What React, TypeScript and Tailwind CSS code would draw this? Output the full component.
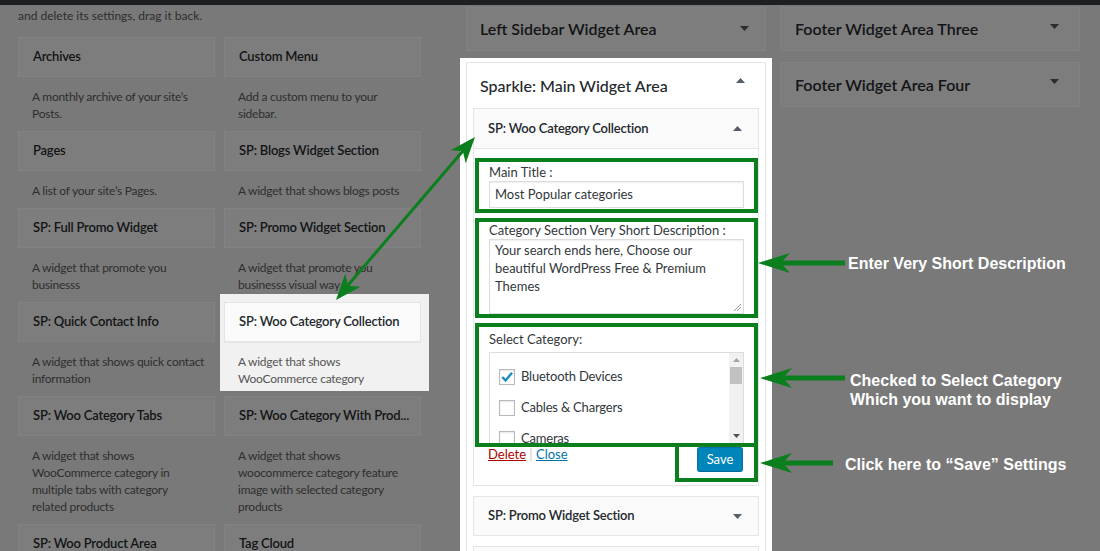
import React from "react";

type Item = { title: string; lines: string[]; active?: boolean };

const rows: [Item, Item][] = [
  [
    { title: "Archives", lines: ["A monthly archive of your site’s", "Posts."] },
    { title: "Custom Menu", lines: ["Add a custom menu to your", "sidebar."] },
  ],
  [
    { title: "Pages", lines: ["A list of your site’s Pages."] },
    { title: "SP: Blogs Widget Section", lines: ["A widget that shows blogs posts"] },
  ],
  [
    { title: "SP: Full Promo Widget", lines: ["A widget that promote you", "businesss"] },
    { title: "SP: Promo Widget Section", lines: ["A widget that promote you", "businesss visual way"] },
  ],
  [
    { title: "SP: Quick Contact Info", lines: ["A widget that shows quick contact", "information"] },
    { title: "SP: Woo Category Collection", lines: ["A widget that shows", "WooCommerce category"], active: true },
  ],
  [
    {
      title: "SP: Woo Category Tabs",
      lines: ["A widget that shows", "WooCommerce category in", "multiple tabs with category", "related products"],
    },
    {
      title: "SP: Woo Category With Prod...",
      lines: ["A widget that shows", "woocommerce category feature", "image with selected category", "products"],
    },
  ],
  [
    { title: "SP: Woo Product Area", lines: [] },
    { title: "Tag Cloud", lines: [] },
  ],
];

const Caret = ({ up, className }: { up?: boolean; className?: string }) => (
  <svg width="9" height="5" viewBox="0 0 9 5" className={className}>
    <path d={up ? "M0 5 L4.5 0 L9 5Z" : "M0 0 L9 0 L4.5 5Z"} fill="currentColor" />
  </svg>
);

const WidgetCard = ({ item }: { item: Item }) => {
  if (item.active) {
    return (
      <div className="-mt-[8px] -ml-[4px] -mr-[8px] w-[209px] bg-[#f1f1f1] pt-[8px] pl-[4px] pr-[8px] pb-[4px]">
        <div className="flex h-[40px] items-center border border-[#e5e5e5] bg-[#fafafa] px-[14px] text-[13px] font-semibold tracking-[-0.2px] text-[#23282d] shadow-[0_1px_1px_rgba(0,0,0,0.04)]">
          {item.title}
        </div>
        <div className="px-[14px] pt-[11px] text-[12px] leading-[17px] tracking-[-0.25px] text-[#555]">
          {item.lines.map((l) => (
            <div key={l} className="whitespace-nowrap">{l}</div>
          ))}
        </div>
      </div>
    );
  }
  return (
    <div className="w-[197px]">
      <div className="flex h-[40px] items-center border border-[#828282] bg-[#7d7d7d] px-[14px] text-[13px] font-semibold tracking-[-0.2px] text-[#121416] whitespace-nowrap">
        {item.title}
      </div>
      {item.lines.length > 0 && (
        <div className="px-[14px] pt-[11px] pb-[9px] text-[12px] leading-[17px] tracking-[-0.25px] text-[#2e2e2e]">
          {item.lines.map((l) => (
            <div key={l} className="whitespace-nowrap">{l}</div>
          ))}
        </div>
      )}
    </div>
  );
};

const Checkbox = ({ checked }: { checked?: boolean }) => (
  <div className="flex h-[16px] w-[16px] items-center justify-center border border-[#b4b9be] bg-white shadow-[inset_0_1px_2px_rgba(0,0,0,0.1)]">
    {checked && (
      <svg width="14" height="14" viewBox="0 0 14 14">
        <path d="M2.2 7 L5.6 10.4 L12 2.8" fill="none" stroke="#1e8cbe" strokeWidth="2.4" />
      </svg>
    )}
  </div>
);

function head(tx: number, ty: number, fx: number, fy: number, L: number, W: number) {
  const dx = tx - fx;
  const dy = ty - fy;
  const len = Math.hypot(dx, dy);
  const ux = dx / len;
  const uy = dy / len;
  const nx = -uy;
  const ny = ux;
  const bx = tx - ux * L;
  const by = ty - uy * L;
  const mx = tx - ux * L * 0.72;
  const my = ty - uy * L * 0.72;
  return `${tx},${ty} ${bx + (nx * W) / 2},${by + (ny * W) / 2} ${mx},${my} ${bx - (nx * W) / 2},${by - (ny * W) / 2}`;
}

const green = "#0b7f1e";

export default function App() {
  return (
    <div className="relative h-[551px] w-[1100px] overflow-hidden bg-[#797979] font-['Lato','Open_Sans',sans-serif]">
      <div className="h-[5px] bg-[#1e1f21]" />
      <div className="flex">
        {/* available widgets */}
        <div className="w-[460px] pl-[18px]">
          <p className="mt-[2px] text-[12px] leading-[17px] text-[#2e2e2e]">and delete its settings, drag it back.</p>
          <div className="mt-[13px]">
            {rows.map((r, i) => (
              <div key={i} className="flex items-start gap-[9px]">
                <WidgetCard item={r[0]} />
                <WidgetCard item={r[1]} />
              </div>
            ))}
          </div>
        </div>

        {/* sidebar column */}
        <div className="w-[312px]">
          <div className="mx-[6px] mt-[2px] flex h-[44px] justify-between border border-[#828282] bg-[#7d7d7d] pl-[13px] pr-[16px]">
            <span className="self-center text-[16px] font-semibold text-[#121416]">Left Sidebar Widget Area</span>
            <Caret className="mt-[18px] text-[#2a2c2e]" />
          </div>

          <div className="mt-[7px] h-[500px] bg-white px-[6px] pt-[4px]">
            <div className="h-full border border-[#e5e5e5] bg-white">
              <div className="flex h-[45px] justify-between pl-[13px] pr-[20px]">
                <span className="self-center text-[16px] font-medium text-[#23282d]">Sparkle: Main Widget Area</span>
                <Caret up className="mt-[15px] text-[#555d66]" />
              </div>

              <div className="px-[6px]">
                {/* open widget */}
                <div className="border border-[#e5e5e5] bg-white">
                  <div className="flex h-[40px] items-center justify-between border-b border-[#e5e5e5] bg-[#fafafa] pl-[14px] pr-[16px]">
                    <span className="text-[13px] font-semibold tracking-[-0.2px] text-[#23282d]">SP: Woo Category Collection</span>
                    <Caret up className="text-[#555d66]" />
                  </div>

                  <div className="pb-[3px]">
                    <div className="ml-[1px] mt-[9px] w-[283px] border-4 border-[#0b7f1e] px-[10px] pt-[2px] pb-[1px]">
                      <div className="text-[13px] leading-[17px] text-[#32373c]">Main Title :</div>
                      <div className="flex h-[27px] items-center border border-[#ddd] px-[5px] text-[13px] text-[#32373c] shadow-[inset_0_1px_2px_rgba(0,0,0,0.07)]">
                        Most Popular categories
                      </div>
                    </div>

                    <div className="ml-[1px] mt-[5px] w-[283px] border-4 border-[#0b7f1e] px-[10px]">
                      <div className="text-[13px] leading-[17px] text-[#32373c]">Category Section Very Short Description :</div>
                      <div className="relative h-[75px] border border-[#ddd] px-[5px] pt-[1px] text-[13px] leading-[18px] text-[#32373c] shadow-[inset_0_1px_2px_rgba(0,0,0,0.07)]">
                        <div>Your search ends here, Choose our</div>
                        <div>beautiful WordPress Free &amp; Premium</div>
                        <div>Themes</div>
                        <svg width="8" height="8" viewBox="0 0 8 8" className="absolute bottom-[2px] right-[2px]">
                          <path d="M1 8 L8 1 M4 8 L8 4" stroke="#999" strokeWidth="1" />
                        </svg>
                      </div>
                    </div>

                    <div className="ml-[1px] mt-[5px] h-[124px] w-[283px] overflow-hidden border-4 border-[#0b7f1e] px-[10px] pt-[4px]">
                      <div className="text-[13px] leading-[17px] text-[#32373c]">Select Category:</div>
                      <div className="mt-[4px] flex h-[92px] border border-[#ddd] bg-white">
                        <div className="flex-1 pl-[9px] pt-[8px] text-[13px] tracking-[-0.2px] text-[#32373c]">
                          {[
                            ["Bluetooth Devices", true],
                            ["Cables & Chargers", false],
                            ["Cameras", false],
                          ].map(([label, c]) => (
                            <div key={label as string} className="flex h-[31px] items-center gap-[6px]">
                              <Checkbox checked={c as boolean} />
                              <span>{label as string}</span>
                            </div>
                          ))}
                        </div>
                        <div className="flex w-[14px] flex-col bg-[#f1f1f1]">
                          <div className="flex h-[14px] items-center justify-center">
                            <svg width="7" height="4" viewBox="0 0 7 4"><path d="M0 4 L3.5 0 L7 4Z" fill="#a3a3a3" /></svg>
                          </div>
                          <div className="mx-[1px] h-[17px] bg-[#c1c1c1]" />
                          <div className="flex-1" />
                          <div className="flex h-[14px] items-center justify-center">
                            <svg width="7" height="4" viewBox="0 0 7 4"><path d="M0 0 L7 0 L3.5 4Z" fill="#505050" /></svg>
                          </div>
                        </div>
                      </div>
                    </div>

                    <div className="-mt-[4px] ml-[1px] flex w-[283px] items-start justify-between">
                      <div className="pl-[13px] pt-[3px] text-[13px] leading-[17px]">
                        <a className="text-[#a00] underline">Delete</a>
                        <span className="text-[#ccc]"> | </span>
                        <a className="text-[#0073aa] underline">Close</a>
                      </div>
                      <div className="flex h-[39px] w-[83px] justify-end border-4 border-[#0b7f1e] pr-[11px]">
                        <div className="flex h-[25px] w-[46px] items-center justify-center rounded-[3px] border border-[#0073aa] border-b-[#006799] bg-[#0085ba] text-[13px] text-white">
                          Save
                        </div>
                      </div>
                    </div>
                  </div>
                </div>

                <div className="mt-[10px] flex h-[40px] items-center justify-between border border-[#e5e5e5] bg-[#fafafa] pl-[14px] pr-[16px]">
                  <span className="text-[13px] font-semibold tracking-[-0.2px] text-[#23282d]">SP: Promo Widget Section</span>
                  <Caret className="text-[#555d66]" />
                </div>
                <div className="mt-[10px] h-[40px] border border-[#e5e5e5] bg-[#fafafa]" />
              </div>
            </div>
          </div>
        </div>

        {/* right column */}
        <div className="ml-[8px] w-[300px]">
          <div className="mt-[2px] flex h-[44px] justify-between border border-[#828282] bg-[#7d7d7d] pl-[14px] pr-[20px]">
            <span className="self-center text-[16px] font-semibold text-[#121416]">Footer Widget Area Three</span>
            <Caret className="mt-[16px] text-[#2a2c2e]" />
          </div>
          <div className="mt-[11px] flex h-[45px] justify-between border border-[#828282] bg-[#7d7d7d] pl-[14px] pr-[20px]">
            <span className="self-center text-[16px] font-semibold text-[#121416]">Footer Widget Area Four</span>
            <Caret className="mt-[16px] text-[#2a2c2e]" />
          </div>

          <div className="font-['Liberation_Sans',Arial,sans-serif] text-[16px] font-bold leading-[19px] text-white">
            <div className="ml-[68px] mt-[147px]">Enter Very Short Description</div>
            <div className="ml-[70px] mt-[98px]">
              <div>Checked to Select Category</div>
              <div>Which you want to display</div>
            </div>
            <div className="ml-[65px] mt-[46px]">Click here to “Save” Settings</div>
          </div>
        </div>
      </div>

      {/* annotation arrows */}
      <svg className="pointer-events-none absolute inset-0" width="1100" height="551">
        <line x1="468" y1="145" x2="343" y2="291" stroke={green} strokeWidth="3" />
        <polygon points={head(475, 137, 336, 300, 26, 20)} fill={green} />
        <polygon points={head(336, 300, 475, 137, 26, 20)} fill={green} />

        <line x1="780" y1="263" x2="845" y2="263" stroke={green} strokeWidth="5" />
        <polygon points={head(758, 263, 845, 263, 32, 20)} fill={green} />
        <line x1="782" y1="378" x2="845" y2="378" stroke={green} strokeWidth="5" />
        <polygon points={head(760, 378, 845, 378, 32, 20)} fill={green} />
        <line x1="782" y1="463" x2="833" y2="463" stroke={green} strokeWidth="5" />
        <polygon points={head(760, 463, 833, 463, 32, 20)} fill={green} />
      </svg>
    </div>
  );
}
